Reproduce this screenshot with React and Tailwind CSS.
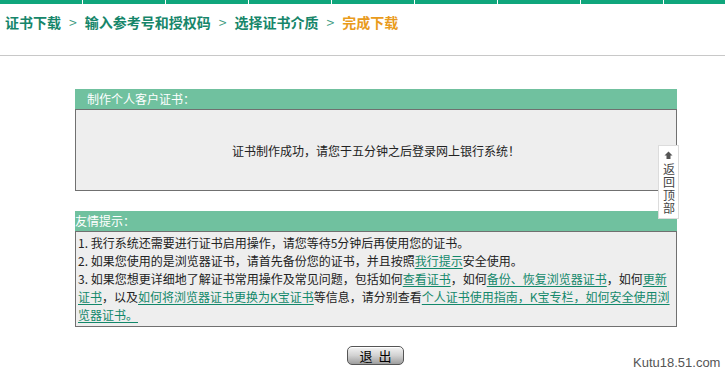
import React from "react";

const cjk = { fontFamily: '"Noto Sans CJK SC", "Liberation Sans", sans-serif' };

const steps = ["证书下载", "输入参考号和授权码", "选择证书介质"];

const Link = ({ children }) => (
  <a href="#" className="text-[#12886a] underline underline-offset-2">
    {children}
  </a>
);

const Panel = ({ title, titleClass, children, bodyClass }) => (
  <div className="w-[602px]">
    <div
      className={`h-[20px] bg-[#70c19f] text-white text-[12px] leading-[20px] ${titleClass}`}
    >
      {title}
    </div>
    <div className={`border border-[#707070] bg-[#eeeeee] ${bodyClass}`}>{children}</div>
  </div>
);

export default function App() {
  return (
    <div className="relative w-[725px] h-[377px] bg-white overflow-hidden text-[#222]" style={cjk}>
      <div className="flex h-[4px] overflow-hidden">
        {Array.from({ length: 9 }).map((_, i) => (
          <div key={i} className="w-[83px] shrink-0 bg-[#10a67c] border-r border-white" />
        ))}
      </div>

      <div className="h-[52px] border-b border-[#c8c8c8] pl-[5px] pt-[9px]">
        <div className="flex items-center text-[14px] font-bold leading-[18px] text-[#16866a]">
          {steps.map((s) => (
            <React.Fragment key={s}>
              <span>{s}</span>
              <span className="mx-[8px] font-normal text-[#3a9a80]">&gt;</span>
            </React.Fragment>
          ))}
          <span className="text-[#e99b1c]">完成下载</span>
        </div>
      </div>

      <div className="flex flex-col items-start pt-[33px] pl-[75px]">
        <Panel title="制作个人客户证书：" titleClass="pl-[12px]" bodyClass="h-[82px] flex items-center justify-center text-[12px]">
          <span className="pt-[2px]">证书制作成功，请您于五分钟之后登录网上银行系统！</span>
        </Panel>

        <div className="h-[20px]" />

        <Panel title="友情提示：" titleClass="pl-0" bodyClass="h-[96px] pl-[2px] pt-[2px] text-[12px] leading-[18px] whitespace-nowrap">
          <div>1. 我行系统还需要进行证书启用操作，请您等待5分钟后再使用您的证书。</div>
          <div>
            2. 如果您使用的是浏览器证书，请首先备份您的证书，并且按照<Link>我行提示</Link>安全使用。
          </div>
          <div>
            3. 如果您想更详细地了解证书常用操作及常见问题，包括如何<Link>查看证书</Link>，如何
            <Link>备份、恢复浏览器证书</Link>，如何<Link>更新</Link>
            <br />
            <Link>证书</Link>，以及<Link>如何将浏览器证书更换为K宝证书</Link>等信息，请分别查看
            <Link>个人证书使用指南，K宝专栏，如何安全使用浏</Link>
            <br />
            <Link>览器证书。</Link>
          </div>
        </Panel>

        <button className="mt-[19px] ml-[272px] w-[57px] h-[19px] rounded-[5px] border border-[#555] bg-gradient-to-b from-[#f4f4f4] via-[#d2d2d2] to-[#9e9e9e] text-[13px] leading-[17px] text-black tracking-[6px] pl-[6px] shadow-[inset_0_1px_0_#fff]">
          退出
        </button>
      </div>

      <div className="absolute left-[658px] top-[145px] w-[21px] h-[74px] bg-white border border-[#dcdcdc] flex flex-col items-center pt-[5px]">
        <svg width="9" height="9" viewBox="0 0 9 9" className="mb-[3px]">
          <path d="M4.5 0.5 L8.5 4.5 L6.5 4.5 L6.5 8 L2.5 8 L2.5 4.5 L0.5 4.5 Z" fill="#555" />
        </svg>
        <div className="[writing-mode:vertical-rl] text-[12px] leading-[14px] tracking-[1px] text-[#444]">
          返回顶部
        </div>
      </div>

      <div
        className="absolute left-[633px] top-[355px] text-[13px] leading-[16px] text-[#555]"
        style={{ fontFamily: '"Liberation Sans", Arial, sans-serif' }}
      >
        Kutu18.51.com
      </div>
    </div>
  );
}
